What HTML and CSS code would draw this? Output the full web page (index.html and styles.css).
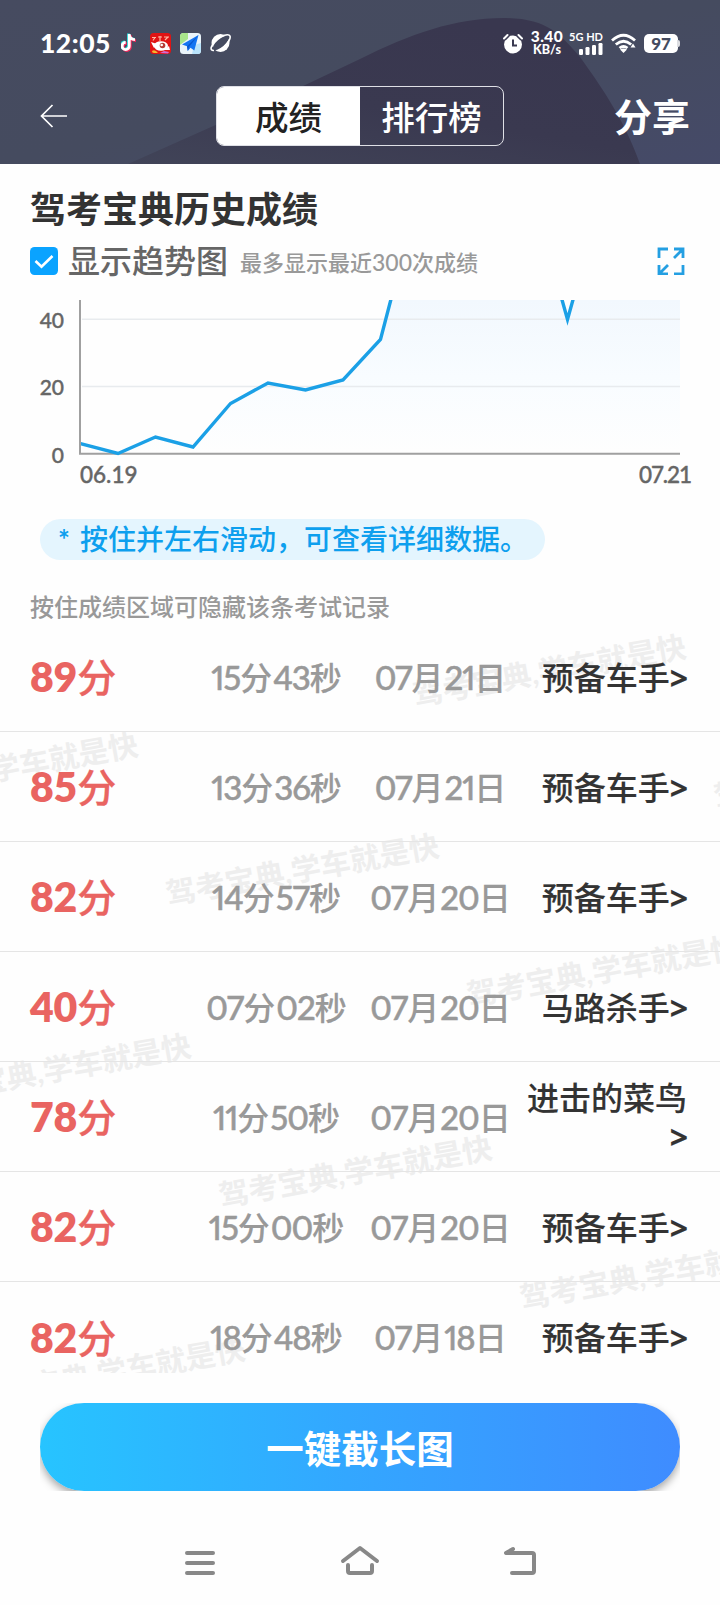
FILE: index.html
```
<!DOCTYPE html>
<html lang="zh-CN">
<head>
<meta charset="utf-8">
<title>历史成绩</title>
<link rel="stylesheet" href="styles.css">
</head>
<body>
<div class="screen">
  <header class="header">
    <svg class="header-bg" viewBox="0 0 720 164" width="720" height="164">
      <defs>
        <linearGradient id="hb" x1="0" y1="0" x2="1" y2="1"><stop offset="0" stop-color="#464b60"/><stop offset=".5" stop-color="#454b5f"/><stop offset="1" stop-color="#454a68"/></linearGradient>
        <linearGradient id="hs" x1="0" y1="1" x2=".6" y2="0"><stop offset="0" stop-color="#414458"/><stop offset=".5" stop-color="#3a3950"/><stop offset="1" stop-color="#39374f"/></linearGradient>
      </defs>
      <rect width="720" height="164" fill="url(#hb)"/>
      <path d="M128 164 L303 86 L360 59 C410 34 455 18 503 18 C547 18 560 34 580 57 C598 82 624 118 640 164Z" fill="url(#hs)"/>
    </svg>
    <div class="status">
      <div class="status-left">
        <span class="clock">12:05</span>
        <svg class="ic-note" viewBox="0 0 16 20" width="16" height="20" fill="none" stroke-width="2.8">
          <path d="M8.300 1v12a3.600 3.600 0 1 1-3.600-3.600M8.300 2c.5 3 2.500 4.500 5.700 4.700" stroke="#27d5d8" transform="translate(-.9 -.6)"/>
          <path d="M8.300 1v12a3.600 3.600 0 1 1-3.600-3.600M8.300 2c.5 3 2.500 4.500 5.700 4.700" stroke="#f3295b" transform="translate(1 1)"/>
          <path d="M8.300 1v12a3.600 3.600 0 1 1-3.600-3.600M8.300 2c.5 3 2.500 4.500 5.700 4.700" stroke="#fff"/>
        </svg>
        <svg class="ic-game" viewBox="0 0 21 21" width="21" height="21">
          <rect width="21" height="21" rx="3.500" fill="#e01414"/>
          <path d="M2 4.500h4M3 7.500l2-3M8 4h4M10 3v5M14 4h5M15 7l3-3" stroke="#ffb3a0" stroke-width="1.200" fill="none"/>
          <ellipse cx="11" cy="13" rx="7" ry="4.800" fill="#fff"/>
          <path d="M1 9l6 2-3 4zM14 17l5-4 1 4z" fill="#fff"/>
          <circle cx="12.500" cy="12.500" r="2.800" fill="#b63b35"/><circle cx="11.700" cy="12" r="1.300" fill="#fff"/>
          <path d="M2 18q3-2 6 2H4q-2 0-2-2z" fill="#f7b52c"/><path d="M10 20l4-2 5 1-1 1.500z" fill="#d46bd1"/>
        </svg>
        <svg class="ic-map" viewBox="0 0 21 21" width="21" height="21">
          <rect width="21" height="21" rx="3.500" fill="#eaf4fa"/>
          <path d="M3.500 0H8v6L0 12V3.500A3.500 3.500 0 0 1 3.500 0z" fill="#a9e58c"/>
          <path d="M14 12l7-2v7.500a3.500 3.500 0 0 1-3.500 3.500H12z" fill="#b9e3fb"/>
          <path d="M18.500 2L2 11.500l5 1.700.8 4.800 2.700-3.300 3.800 2.800z" fill="#1475f2"/>
          <path d="M18.500 2L7 13.200l.8 4.800 1.200-4z" fill="#0857cf"/>
        </svg>
        <svg class="ic-planet" viewBox="0 0 22 20" width="22" height="20">
          <circle cx="10.500" cy="10" r="9" fill="#fff"/>
          <ellipse cx="10.800" cy="10" rx="10" ry="4" transform="rotate(-40 10.800 10)" fill="#454b60"/>
          <path d="M4 17.500C-1 18 1 12 6 7C11 2 19 .5 20 3C21 6 17 11 14 14" fill="none" stroke="#fff" stroke-width="1.600"/>
        </svg>
      </div>
      <div class="status-right">
        <svg viewBox="0 0 20 21" width="20" height="21" class="ic-alarm">
          <circle cx="10" cy="11.500" r="9" fill="#fff"/>
          <path d="M1 6L5 2M19 6l-4-4" stroke="#3a3950" stroke-width="4.500"/>
          <path d="M1 5.500L4.500 2M19 5.500L15.500 2" stroke="#fff" stroke-width="2" stroke-linecap="round"/>
          <path d="M10 6.500v6h4" stroke="#3a3950" stroke-width="2" fill="none"/>
        </svg>
        <div class="speed"><span>3.40</span><span class="unit">KB/s</span></div>
        <div class="net"><span>5G HD</span>
          <svg viewBox="0 0 24 12" width="24" height="12" fill="#fff"><rect x="0" y="6" width="4" height="6" rx="1.200"/><rect x="6.500" y="4" width="4" height="8" rx="1.200"/><rect x="13" y="2" width="4" height="10" rx="1.200"/><rect x="19.500" y="0" width="4" height="12" rx="1.200"/></svg>
        </div>
        <svg viewBox="0 0 26 21" width="26" height="21" class="ic-wifi" fill="none" stroke="#fff" stroke-width="2.800">
          <path d="M1 7.500Q12.500-3 24 7.500M4.800 11.500q7.700-6.500 15.400 0M8.500 15q4-3 8 0"/>
          <path d="M9 16.500q3.500-2 7 0L12.500 20z" fill="#fff" stroke="none"/><path d="M22 10.500l2.500 4h-5z" fill="#fff" stroke="none"/>
        </svg>
        <div class="battery"><span>97</span></div>
      </div>
    </div>
    <div class="bar">
      <svg class="back" viewBox="0 0 28 24" width="28" height="24" fill="none" stroke="#fff" stroke-width="1.700"><path d="M27 12H1.500M12.500 1L1.500 12l11 11"/></svg>
      <div class="tabs"><div class="tab active">成绩</div><div class="tab">排行榜</div></div>
      <div class="share">分享</div>
    </div>
  </header>

  <main>
    <section class="trend">
      <h1>驾考宝典历史成绩</h1>
      <div class="options">
        <svg class="check" viewBox="0 0 28 28" width="28" height="28"><rect width="28" height="28" rx="4.500" fill="#0aa3ff"/><path d="M5.500 14l6 5.800L22.500 9" fill="none" stroke="#fff" stroke-width="2.600"/></svg>
        <span class="label">显示趋势图</span>
        <span class="limit">最多显示最近<i>300</i>次成绩</span>
        <svg class="expand" viewBox="0 0 28 28" width="28" height="28" fill="none" stroke="#249fe2" stroke-width="2.800"><path d="M11 2H2v9M17 27h9v-9M17 2h9v9M26 2l-9 9M2 18v9h9M2 27l9-9"/></svg>
      </div>
      <svg class="chart" viewBox="0 300 720 200" width="720" height="200">
        <defs>
          <linearGradient id="area" gradientUnits="userSpaceOnUse" x1="0" y1="300" x2="0" y2="453"><stop offset="0" stop-color="#f2f8fe"/><stop offset=".5" stop-color="#f8fcff"/><stop offset="1" stop-color="#fefefe"/></linearGradient>
          <clipPath id="plot"><rect x="81" y="300" width="599" height="156"/></clipPath>
        </defs>
        <g clip-path="url(#plot)">
          <path d="M80 443.500L118 453.500L155.500 437L193 447L230.500 403.500L268 383L305.500 390L343 380L380.500 339.500L396 280H556.500L567.500 319.500L578.500 280H680V453H80Z" fill="url(#area)"/>
          <path d="M82 319.300H680M82 386.500H680" stroke="#e8ebee" stroke-width="1.600"/>
        </g>
        <path d="M80 300V453.700H680" fill="none" stroke="#a0a0a0" stroke-width="2"/>
        <path clip-path="url(#plot)" d="M80 443.500L118 453.500L155.500 437L193 447L230.500 403.500L268 383L305.500 390L343 380L380.500 339.500L396 280M556.500 280L567.500 319.500L578.500 280" fill="none" stroke="#1ba0e6" stroke-width="3.400"/>
        <g class="ylabels"><text x="64" y="328">40</text><text x="64" y="395.300">20</text><text x="64" y="462.500">0</text></g>
        <g class="xlabels"><text x="80" y="482.500">06.19</text><text x="639" y="482.500" textLength="53">07.21</text></g>
      </svg>
      <div class="hint"><span class="star">*</span>按住并左右滑动，可查看详细数据。</div>
    </section>

    <p class="note">按住成绩区域可隐藏该条考试记录</p>

    <section class="records">
      <svg class="marks" viewBox="0 621 720 752" width="720" height="752">
        <g id="marks">
          <text transform="translate(415 706) rotate(-10.200)">驾考宝典,学车就是快</text>
          <text transform="translate(716 808) rotate(-10.200)">驾考宝典,学车就是快</text>
          <text transform="translate(-133 804) rotate(-10.200)">驾考宝典,学车就是快</text>
          <text transform="translate(168 905) rotate(-10.200)">驾考宝典,学车就是快</text>
          <text transform="translate(469 1006) rotate(-10.200)">驾考宝典,学车就是快</text>
          <text transform="translate(-80 1105) rotate(-10.200)">驾考宝典,学车就是快</text>
          <text transform="translate(221 1207) rotate(-10.200)">驾考宝典,学车就是快</text>
          <text transform="translate(522 1309) rotate(-10.200)">驾考宝典,学车就是快</text>
          <text transform="translate(-26 1408) rotate(-10.200)">驾考宝典,学车就是快</text>
        </g>
      </svg>
      <div class="row"><b>89<em>分</em></b><span><i>15</i>分<i>43</i>秒</span><span><i>07</i>月<i>21</i>日</span><strong>预备车手<u>&gt;</u></strong></div>
      <div class="row"><b>85<em>分</em></b><span><i>13</i>分<i>36</i>秒</span><span><i>07</i>月<i>21</i>日</span><strong>预备车手<u>&gt;</u></strong></div>
      <div class="row"><b>82<em>分</em></b><span><i>14</i>分<i>57</i>秒</span><span><i>07</i>月<i>20</i>日</span><strong>预备车手<u>&gt;</u></strong></div>
      <div class="row"><b>40<em>分</em></b><span><i>07</i>分<i>02</i>秒</span><span><i>07</i>月<i>20</i>日</span><strong>马路杀手<u>&gt;</u></strong></div>
      <div class="row"><b>78<em>分</em></b><span><i>11</i>分<i>50</i>秒</span><span><i>07</i>月<i>20</i>日</span><strong>进击的菜鸟 <u>&gt;</u></strong></div>
      <div class="row"><b>82<em>分</em></b><span><i>15</i>分<i>00</i>秒</span><span><i>07</i>月<i>20</i>日</span><strong>预备车手<u>&gt;</u></strong></div>
      <div class="row"><b>82<em>分</em></b><span><i>18</i>分<i>48</i>秒</span><span><i>07</i>月<i>18</i>日</span><strong>预备车手<u>&gt;</u></strong></div>
    </section>
  </main>

  <footer>
    <div class="action-wrap"><div class="action">一键截长图</div></div>
    <nav>
      <svg viewBox="0 0 40 32" width="40" height="32"><path d="M7 8H33M7 18H33M7 28H33"/></svg>
      <svg viewBox="0 0 40 32" width="40" height="32"><path d="M3 16L20 3L37 16M8 20v6q0 2 2 2h20q2 0 2-2v-6"/></svg>
      <svg viewBox="0 0 40 32" width="40" height="32"><path d="M13 4L6 8H32q2 0 2 2V26q0 2-2 2H12"/></svg>
    </nav>
  </footer>
</div>
</body>
</html>
```
FILE: styles.css
```
* { box-sizing: border-box; }
body {
  margin: 0;
  width: 720px;
  background: #fff;
  font-family: Lato, "Noto Sans CJK SC", sans-serif;
  font-weight: 500;
}
i, em, u { font-style: normal; text-decoration: none; }
svg { display: block; flex: none; }
.screen { width: 720px; height: 1605px; overflow: hidden; display: flex; flex-direction: column; background: #fefefe; }

.header { position: relative; height: 164px; flex: none; color: #fff; }
.header-bg { position: absolute; left: 0; top: 0; }
.status { position: relative; display: flex; justify-content: space-between; padding: 28px 40px 0 40px; height: 86px; }
.status-left, .status-right { display: flex; align-items: center; height: 30px; }
.clock { font-weight: 900; font-size: 26.500px; width: 81px; letter-spacing: 0.5px; white-space: nowrap; padding-bottom: 1px; }
.ic-game { margin-left: 13px; }
.ic-map { margin-left: 9px; }
.ic-planet { margin-left: 9px; }
.speed { width: 36px; margin-left: 6px; display: flex; flex-direction: column; align-items: center; font-weight: 900; font-size: 15.500px; line-height: 13px; letter-spacing: 0.5px; }
.speed .unit { font-size: 12.500px; letter-spacing: 0; font-weight: 900; }
.net { width: 34px; margin-left: 4px; font-weight: 700; font-size: 11px; line-height: 12px; white-space: nowrap; display: flex; flex-direction: column; align-items: flex-end; }
.ic-wifi { margin-left: 8px; }
.battery { position: relative; width: 34px; height: 19px; margin-left: 7px; border-radius: 5px; background: #fff; color: #454b60; font-weight: 900; font-size: 17px; line-height: 19px; text-align: center; }
.battery::after { content: ""; position: absolute; right: -2px; top: 6px; width: 3px; height: 7px; border-radius: 0 2px 2px 0; background: #dcdde1; }
.status-right { margin-right: 2px; }

.bar { position: relative; display: grid; grid-template-columns: 176px 288px 1fr; padding-left: 40px; height: 60px; align-items: center; }
.tabs { display: grid; grid-template-columns: 1fr 1fr; height: 60px; border: 1.500px solid #dfe0e6; border-radius: 8px; overflow: hidden; }
.tab { font-size: 33.500px; display: flex; align-items: center; justify-content: center; padding-bottom: 2px; }
.tab.active { background: #fff; color: #222; }
.share { font-size: 38px; font-weight: 700; justify-self: end; margin-right: 30px; padding-bottom: 3px; }

.trend { height: 415px; }
h1 { margin: 0; padding: 20px 0 0 30px; font-size: 36px; line-height: 50px; font-weight: 700; color: #333; }
.options { display: flex; align-items: center; height: 40px; margin-top: 7px; padding: 0 35px 0 30px; }
.label { margin-left: 10px; font-size: 32px; line-height: 40px; color: #666; }
.limit { margin-left: 12px; font-size: 22px; line-height: 40px; color: #999; padding-top: 2px; }
.limit i { font-size: 23px; }
.expand { margin-left: auto; }
.chart { margin-top: 19px; }
.ylabels { font-size: 21px; fill: #666; stroke: #666; stroke-width: 0.4px; text-anchor: end; }
.xlabels { font-size: 22.500px; fill: #666; stroke: #666; stroke-width: 0.4px; }
.hint { margin: 19px 0 0 40px; width: 505px; height: 41px; border-radius: 21px; background: #e4f5fe; color: #0d9fee; font-size: 28px; line-height: 41px; padding-left: 18px; white-space: nowrap; }
.star { display: inline-block; width: 22px; font-weight: 700; }
.note { margin: 0; padding: 10px 0 0 30px; height: 43px; font-size: 24px; line-height: 36px; color: #999; }

.records { position: relative; height: 751px; overflow: hidden; }
.marks { position: absolute; left: 0; top: -1px; }
#marks text { font-size: 30px; fill: #eee; font-weight: 700; }
.row { position: relative; display: grid; grid-template-columns: 165px 163px 165px 1fr; align-items: center; height: 110px; padding: 1px 33px 0 30px; border-bottom: 1px solid #e5e5e5; font-size: 32px; line-height: 39px; }
.row:last-child { border: 0; }
.row b { font-size: 41px; font-weight: 800; color: #e96461; line-height: 50px; white-space: nowrap; letter-spacing: -0.2px; }
.row em { font-size: 39px; font-weight: 500; -webkit-text-stroke: 0.3px; }
.row span { text-align: center; color: #999; white-space: nowrap; -webkit-text-stroke: 0.15px; }
.row i { font-size: 33px; font-variant-numeric: proportional-nums; letter-spacing: -1.100px; -webkit-text-stroke: 0.5px; }
.row span i + i { margin-left: 1px; }
.row strong { font-weight: 500; text-align: right; color: #333; -webkit-text-stroke: 0.15px; }
.row u { display: inline-block; font-family: "Noto Sans", sans-serif; font-weight: 700; font-size: 32px; line-height: 39px; margin-right: -1px; }

footer { height: 232px; padding-top: 30px; }
.action-wrap { margin: 0 40px; height: 88px; overflow: hidden; }
.action { height: 88px; border-radius: 44px; background: linear-gradient(90deg, #27c4ff, #33a7ff 48%, #3f8cff); box-shadow: 0 4px 8px rgba(0,0,0,.35); color: #fff; font-weight: 700; font-size: 37.500px; line-height: 91px; text-align: center; }
nav { display: flex; justify-content: center; gap: 120px; margin-top: 54px; }
nav svg { fill: none; stroke: #888; stroke-width: 4; stroke-linecap: round; stroke-linejoin: round; }
```
